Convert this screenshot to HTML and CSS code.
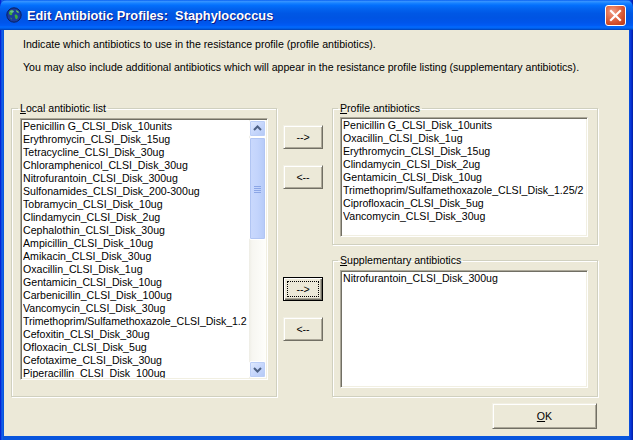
FILE: index.html
```html
<!DOCTYPE html>
<html>
<head>
<meta charset="utf-8">
<link rel="stylesheet" href="styles.css">
</head>
<body>
<div class="window">
  <div class="titlebar">
    <svg class="app-icon" viewBox="0 0 16 16" width="16" height="16">
      <circle cx="8" cy="8" r="7.2" fill="#1B3C9C" stroke="#0A1A55" stroke-width="0.9"/>
      <path d="M3.5 4.2 C4.8 2.8 6.8 2.6 7.8 4.4 C7 5.6 6 5.8 6.2 7.6 C5.4 8.8 4.2 8.4 3.3 7.2 C2.9 6 3 5 3.5 4.2 Z" fill="#3FAE3A"/>
      <path d="M8.8 7.8 C10.6 6.9 12.2 8.4 11.8 10.6 C11.2 12.6 9.6 12.6 9.2 10.8 C9 9.8 8.4 8.8 8.8 7.8 Z" fill="#3FAE3A"/>
      <path d="M9.8 3.2 C11.2 3.2 12.8 4.4 13 5.8 C11.8 6 10.4 5.2 9.8 3.2 Z" fill="#6CCB55"/>
      <path d="M4.5 10.5 C5.3 10.8 6 11.6 5.8 12.6 C5 12.3 4.5 11.5 4.5 10.5 Z" fill="#3FAE3A"/>
      <ellipse cx="6" cy="4.6" rx="2" ry="1.1" fill="#9ED0FF" opacity="0.45"/>
    </svg>
    <span class="title">Edit Antibiotic Profiles:&nbsp; Staphylococcus</span>
    <div class="close">
      <svg viewBox="0 0 21 21" width="21" height="21">
        <path d="M6 6 L15 15 M15 6 L6 15" stroke="#fff" stroke-width="2.2" stroke-linecap="square"/>
      </svg>
    </div>
  </div>
  <div class="client">
    <div class="intro">
      <p>Indicate which antibiotics to use in the resistance profile (profile antibiotics).</p>
      <p class="second-line">You may also include additional antibiotics which will appear in the resistance profile listing (supplementary antibiotics).</p>
    </div>
    <div class="main">
      <fieldset class="group group-local">
        <legend><u>L</u>ocal antibiotic list</legend>
        <div class="listbox listbox-local">
          <ul class="items">
            <li>Penicillin G_CLSI_Disk_10units</li>
            <li>Erythromycin_CLSI_Disk_15ug</li>
            <li>Tetracycline_CLSI_Disk_30ug</li>
            <li>Chloramphenicol_CLSI_Disk_30ug</li>
            <li>Nitrofurantoin_CLSI_Disk_300ug</li>
            <li>Sulfonamides_CLSI_Disk_200-300ug</li>
            <li>Tobramycin_CLSI_Disk_10ug</li>
            <li>Clindamycin_CLSI_Disk_2ug</li>
            <li>Cephalothin_CLSI_Disk_30ug</li>
            <li>Ampicillin_CLSI_Disk_10ug</li>
            <li>Amikacin_CLSI_Disk_30ug</li>
            <li>Oxacillin_CLSI_Disk_1ug</li>
            <li>Gentamicin_CLSI_Disk_10ug</li>
            <li>Carbenicillin_CLSI_Disk_100ug</li>
            <li>Vancomycin_CLSI_Disk_30ug</li>
            <li class="tight">Trimethoprim/Sulfamethoxazole_CLSI_Disk_1.2</li>
            <li>Cefoxitin_CLSI_Disk_30ug</li>
            <li>Ofloxacin_CLSI_Disk_5ug</li>
            <li>Cefotaxime_CLSI_Disk_30ug</li>
            <li>Piperacillin_CLSI_Disk_100ug</li>
          </ul>
          <div class="scrollbar">
            <div class="sb-btn">
              <svg viewBox="0 0 15 15" width="15" height="15"><polyline points="4,9 7.5,5.5 11,9" fill="none" stroke="#4D6185" stroke-width="2"/></svg>
            </div>
            <div class="sb-thumb">
              <svg viewBox="0 0 7 8" width="7" height="8"><path d="M0 1.5 H7 M0 3.5 H7 M0 5.5 H7 M0 7.5 H7" stroke="#8CA6E6" stroke-width="1"/></svg>
            </div>
            <div class="sb-track"></div>
            <div class="sb-btn">
              <svg viewBox="0 0 15 15" width="15" height="15"><polyline points="4,6 7.5,9.5 11,6" fill="none" stroke="#4D6185" stroke-width="2"/></svg>
            </div>
          </div>
        </div>
      </fieldset>
      <div class="movers">
        <button class="btn btn-move">--&gt;</button>
        <button class="btn btn-move gap-small">&lt;--</button>
        <button class="btn btn-move gap-large focused">--&gt;</button>
        <button class="btn btn-move gap-small">&lt;--</button>
      </div>
      <div class="right">
        <fieldset class="group group-profile">
          <legend><u>P</u>rofile antibiotics</legend>
          <div class="listbox listbox-profile">
            <ul class="items">
              <li>Penicillin G_CLSI_Disk_10units</li>
              <li>Oxacillin_CLSI_Disk_1ug</li>
              <li>Erythromycin_CLSI_Disk_15ug</li>
              <li>Clindamycin_CLSI_Disk_2ug</li>
              <li>Gentamicin_CLSI_Disk_10ug</li>
              <li>Trimethoprim/Sulfamethoxazole_CLSI_Disk_1.25/2</li>
              <li>Ciprofloxacin_CLSI_Disk_5ug</li>
              <li>Vancomycin_CLSI_Disk_30ug</li>
            </ul>
          </div>
        </fieldset>
        <fieldset class="group group-supp">
          <legend><u>S</u>upplementary antibiotics</legend>
          <div class="listbox listbox-supp">
            <ul class="items">
              <li>Nitrofurantoin_CLSI_Disk_300ug</li>
            </ul>
          </div>
        </fieldset>
        <div class="actions">
          <button class="btn btn-ok"><u>O</u>K</button>
        </div>
      </div>
    </div>
  </div>
</div>
</body>
</html>
```

FILE: styles.css
```css
* { box-sizing: border-box; }

html, body {
  margin: 0;
  padding: 0;
  width: 633px;
  height: 440px;
  overflow: hidden;
  background: #0054E3;
}

body {
  font-family: "Liberation Sans", Arial, sans-serif;
  font-size: 10.6px;
  color: #000;
}

.window {
  width: 633px;
  height: 440px;
  display: flex;
  flex-direction: column;
  background: linear-gradient(to right, #0019CF 0, #0831D9 1px, #166AEE 2px, #0855DD 3px, #0855DD 629px, #0831D9 631px, #001EA0 633px);
}

.titlebar {
  height: 30px;
  flex: none;
  display: flex;
  align-items: center;
  border-radius: 7px 7px 0 0;
  background: linear-gradient(to bottom,
    #0058EE 0%, #3A93FF 4%, #288EFF 7%, #127DFF 12%, #036FFC 18%,
    #0262EE 30%, #0057E5 45%, #0054E3 60%, #0055EB 75%, #005BF5 85%,
    #026AFE 90%, #0062EF 94%, #0052D6 97%, #0040AB 100%);
}

.app-icon {
  margin-left: 6px;
  flex: none;
}

.title {
  margin-left: 5px;
  font-family: "Liberation Sans", Arial, sans-serif;
  font-weight: bold;
  font-size: 12.8px;
  color: #fff;
  white-space: nowrap;
  text-shadow: 1px 1px 0 #0A1883;
}

.close {
  margin-left: auto;
  margin-right: 7px;
  width: 21px;
  height: 21px;
  border: 1px solid #fff;
  border-radius: 3px;
  background: radial-gradient(circle at 35% 30%, #F0A08A 0, #E3704F 35%, #D04A26 70%, #B93A18 100%);
  display: flex;
  align-items: center;
  justify-content: center;
  overflow: hidden;
}

.close svg { margin: -1px; }

.client {
  flex: 1;
  margin: 0 4px 4px 4px;
  background: #ECE9D8;
  display: flex;
  flex-direction: column;
}

.intro {
  padding: 8px 0 0 19px;
}

.intro p {
  margin: 0;
  line-height: 13px;
  white-space: nowrap;
}

.intro .second-line { margin-top: 10px; }

.main {
  margin-top: 28px;
  padding-left: 7px;
  display: flex;
  align-items: flex-start;
}

.group {
  margin: 0;
  width: 266px;
  min-width: 0;
  border: 1px solid #D0D0BF;
  box-shadow: inset 1px 1px 0 #fff, 1px 1px 0 #fff;
}

.group legend {
  padding: 0 2px;
  margin-left: -2px;
  line-height: 12px;
  height: 12px;
  white-space: nowrap;
}

.group-local { padding: 4px 9px 16px 8px; }
.group-profile { padding: 3px 9px 7px 7px; }
.group-supp { padding: 4px 9px 8px 7px; margin-top: 9px; }

.listbox {
  background: #fff;
  border: 1px solid;
  border-color: #ACA899 #fff #fff #ACA899;
  box-shadow: inset 1px 1px 0 #716F64, inset -1px -1px 0 #F1EFE2;
  padding: 1px;
  display: flex;
  overflow: hidden;
}

.listbox-local { width: 248px; height: 262px; }
.listbox-profile { width: 248px; height: 120px; }
.listbox-supp { width: 248px; height: 118px; }

.items {
  list-style: none;
  margin: 0;
  padding: 0 0 0 1px;
  flex: 1;
  min-width: 0;
  overflow: hidden;
}

.items li {
  line-height: 13px;
  height: 13px;
  white-space: nowrap;
  overflow: hidden;
}

.items li.tight { letter-spacing: -0.05px; }

.scrollbar {
  width: 17px;
  flex: none;
  display: flex;
  flex-direction: column;
  background: linear-gradient(to right, #EEEDE5 0, #F7F6F1 3px, #FEFEFB 100%);
}

.sb-btn {
  height: 17px;
  flex: none;
  border: 1px solid #fff;
  border-radius: 2px;
  background: linear-gradient(135deg, #E3ECFE 0, #C7D7FC 50%, #B3C8F5 100%);
  box-shadow: inset 0 0 0 1px #BBCEF7;
  display: flex;
  align-items: center;
  justify-content: center;
}

.sb-thumb {
  height: 103px;
  flex: none;
  border: 1px solid #fff;
  border-radius: 2px;
  background: linear-gradient(to right, #CAD9FD 0, #C3D4FC 50%, #B5CAF8 100%);
  box-shadow: inset 0 0 0 1px #B1C5F3;
  display: flex;
  align-items: center;
  justify-content: center;
}

.sb-track { flex: 1; }

.movers {
  margin-left: 6px;
  padding-top: 23px;
  width: 40px;
  display: flex;
  flex-direction: column;
}

.btn {
  font-family: "Liberation Sans", Arial, sans-serif;
  font-size: 10.6px;
  color: #000;
  background: #ECE9D8;
  border: 1px solid;
  border-color: #F1EFE2 #716F64 #716F64 #F1EFE2;
  box-shadow: inset 1px 1px 0 #fff, inset -1px -1px 0 #ACA899;
  padding: 0;
  margin: 0;
  display: flex;
  align-items: center;
  justify-content: center;
}

.btn-move { width: 40px; height: 24px; }
.gap-small { margin-top: 16px; }
.gap-large { margin-top: 88px; }

.btn.focused {
  border-color: #000;
  box-shadow: inset 1px 1px 0 #fff, inset -1px -1px 0 #716F64, inset -2px -2px 0 #ACA899;
  outline: 1px dotted #000;
  outline-offset: -5px;
}

.right {
  margin-left: 9px;
  width: 266px;
  display: flex;
  flex-direction: column;
}

.actions {
  display: flex;
  justify-content: flex-end;
  margin-top: 6px;
  padding-right: 1px;
}

.btn-ok { width: 105px; height: 26px; }
```
